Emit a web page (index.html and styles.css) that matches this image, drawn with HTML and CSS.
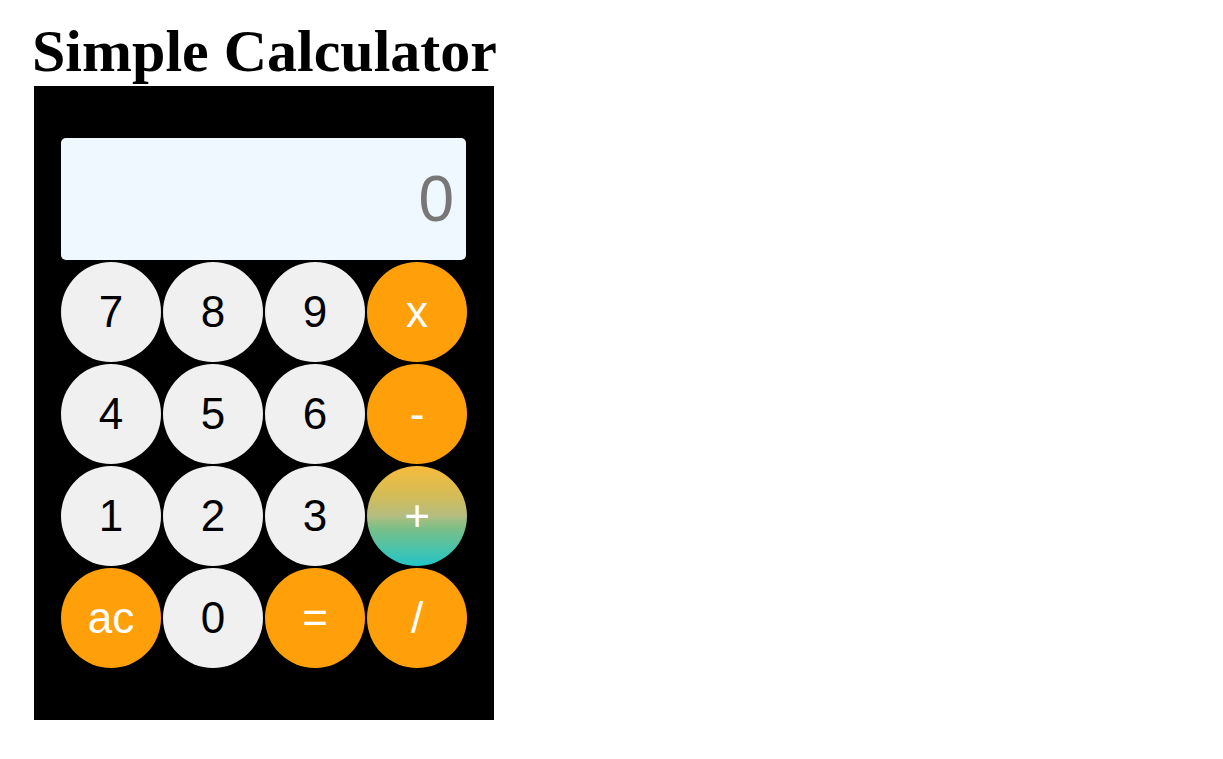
FILE: index.html
```html
<!DOCTYPE html>
<html>
<head>
<meta charset="utf-8">
<title>Simple Calculator</title>
<link rel="stylesheet" href="styles.css">
</head>
<body>
<div class="page">
  <h1 class="title">Simple Calculator</h1>
  <div class="calculator">
    <div class="display">0</div>
    <div class="keys">
      <button class="key">7</button>
      <button class="key">8</button>
      <button class="key">9</button>
      <button class="key op">x</button>
      <button class="key">4</button>
      <button class="key">5</button>
      <button class="key">6</button>
      <button class="key op">-</button>
      <button class="key">1</button>
      <button class="key">2</button>
      <button class="key">3</button>
      <button class="key op plus">+</button>
      <button class="key op">ac</button>
      <button class="key">0</button>
      <button class="key op">=</button>
      <button class="key op">/</button>
    </div>
  </div>
</div>
</body>
</html>
```
FILE: styles.css
```css
body {
  margin: 0;
  background: #ffffff;
}
.page {
  padding: 0 34px;
}
.title {
  margin: 17px 0 0 -2px;
  font-family: "Liberation Serif", "Times New Roman", serif;
  font-weight: bold;
  font-size: 60px;
  line-height: normal;
  color: #000;
}
.calculator {
  width: 460px;
  box-sizing: border-box;
  padding: 52px 27px;
  background: #000;
}
.display {
  width: 405px;
  height: 122px;
  box-sizing: border-box;
  margin-bottom: 2px;
  padding-right: 12px;
  border-radius: 5px;
  background: #f0f8ff;
  color: #777777;
  font-family: "Liberation Sans", Arial, sans-serif;
  font-size: 64px;
  display: flex;
  align-items: center;
  justify-content: flex-end;
}
.keys {
  display: grid;
  grid-template-columns: repeat(4, 100px);
  grid-auto-rows: 100px;
  gap: 2px;
}
.key {
  width: 100px;
  height: 100px;
  margin: 0;
  padding: 0;
  border: none;
  border-radius: 50%;
  background: #f0f0f0;
  color: #000;
  font-family: "Liberation Sans", Arial, sans-serif;
  font-size: 44px;
  line-height: 1;
  display: flex;
  align-items: center;
  justify-content: center;
}
.op {
  background: #ffa00a;
  color: #fff;
}
.plus {
  background: linear-gradient(to bottom, #f7bb3a 0%, #d2bc58 30%, #b4bd80 50%, #7cbf86 62%, #22c5c8 100%);
}
```
